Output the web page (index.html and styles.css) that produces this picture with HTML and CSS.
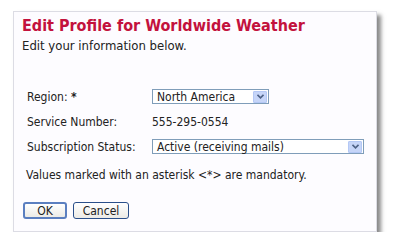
FILE: index.html
```html
<!DOCTYPE html>
<html lang="en">
<head>
    <meta charset="UTF-8">
    <title>Edit Profile</title>
    <link rel="stylesheet" href="styles.css">
</head>
<body>

    <div class="panel">
        <h2 class="title">Edit Profile for Worldwide Weather</h2>
        <p class="intro">Edit your information below.</p>

        <div class="fields">
            <div class="label">Region: <b>*</b></div>
            <div class="select region">
                <span class="value">North America</span>
                <span class="arrow">
                    <svg width="7" height="5" viewBox="0 0 7 5"><path d="M0.5 0.8 L3.5 3.8 L6.5 0.8" fill="none" stroke="#4d6185" stroke-width="1.6"/></svg>
                </span>
            </div>

            <div class="label">Service Number:</div>
            <div class="plain">555-295-0554</div>

            <div class="label">Subscription Status:</div>
            <div class="select status">
                <span class="value">Active (receiving mails)</span>
                <span class="arrow">
                    <svg width="7" height="5" viewBox="0 0 7 5"><path d="M0.5 0.8 L3.5 3.8 L6.5 0.8" fill="none" stroke="#4d6185" stroke-width="1.6"/></svg>
                </span>
            </div>
        </div>

        <p class="note">Values marked with an asterisk &lt;*&gt; are mandatory.</p>

        <div class="buttons">
            <button class="ok">OK</button>
            <button class="cancel">Cancel</button>
        </div>
    </div>

</body>
</html>
```

FILE: styles.css
```css
body {
    margin: 0;
    padding: 11px 0 0 13px;
    background-color: #fff;
    font-family: 'DejaVu Sans Condensed', 'DejaVu Sans', sans-serif;
    font-size: 12px;
    color: #222;
}

/* Panel */
.panel {
    width: 354px;
    height: 215px;
    padding: 4px 0 0 8px;
    background-color: #fdfcff;
    border: 1px solid #dcdce4;
    box-shadow: 4px 4px 4px rgba(60, 60, 60, 0.6);
}

.title {
    margin: 0;
    font-size: 16px;
    font-weight: bold;
    color: #c3123d;
    line-height: 20px;
}

.intro {
    margin: 2px 0 0 0;
    font-size: 13px;
    line-height: 16px;
}

/* Form rows */
.fields {
    display: grid;
    grid-template-columns: 125px auto;
    grid-auto-rows: 25px;
    align-items: center;
    margin: 30px 0 0 5px;
}

.label b {
    font-weight: bold;
}

.select {
    display: flex;
    align-items: center;
    justify-content: space-between;
    height: 13px;
    padding: 0 1px 0 4px;
    background-color: #fff;
    border: 1px solid #7f9db9;
}

.region {
    width: 110px;
}

.status {
    width: 205px;
}

.arrow {
    display: flex;
    align-items: center;
    justify-content: center;
    width: 12px;
    height: 10px;
    background-color: #c6d5f8;
    border: 1px solid #b4c8f5;
    border-radius: 1px;
}

.note {
    margin: 9px 0 0 4px;
    font-size: 12px;
    line-height: 14px;
}

/* Buttons */
.buttons {
    display: flex;
    gap: 6px;
    margin: 20px 0 0 1px;
}

button {
    height: 17px;
    padding: 0;
    font-family: inherit;
    font-size: 12px;
    color: #222;
    background: linear-gradient(#ffffff, #ecebe6);
    border: 1px solid #2a4f8a;
    border-radius: 3px;
    cursor: pointer;
}

.ok {
    width: 44px;
    border-width: 2px;
    border-color: #5b7fc0;
}

.cancel {
    width: 56px;
}
```
